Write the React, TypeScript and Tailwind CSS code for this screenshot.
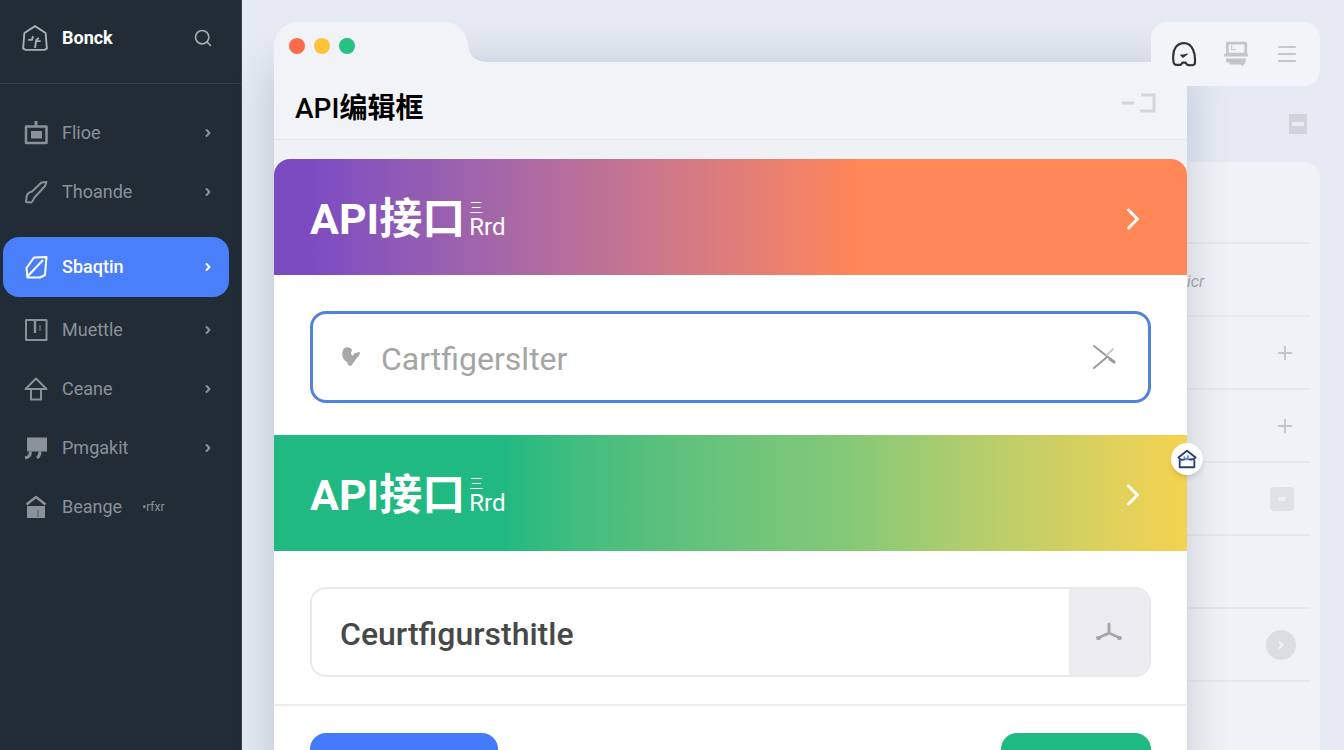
import type { ReactNode } from "react";
import { ChevronRight, Menu, Plus, Search } from "lucide-react";
import clsx from "clsx";

type IconProps = { children: ReactNode; className?: string };

const Icon = ({ children, className }: IconProps) => (
  <svg
    viewBox="0 0 24 24"
    fill="none"
    stroke="currentColor"
    strokeWidth="2"
    strokeLinejoin="round"
    className={clsx("shrink-0", className)}
    aria-hidden="true"
  >
    {children}
  </svg>
);

const navItems = [
  {
    label: "Flioe",
    icon: (
      <>
        <path d="M2 5.500h20.500v16.500H2z" strokeWidth="2.500" />
        <path d="M7 10h11v7.500H7z" fill="currentColor" stroke="none" />
        <path d="M12 5.500V0" strokeWidth="3" />
      </>
    ),
  },
  {
    label: "Thoande",
    icon: (
      <path
        d="M22.500 2l-5 .5L8 11.500c-4 1-5.500 3-5.500 6L2 22l5 .5c2-.5 2-3 3.500-5L21 6z"
        strokeWidth="2"
      />
    ),
  },
  {
    label: "Sbaqtin",
    active: true,
    icon: (
      <>
        <path d="M10 2.500l12.500-.5-1.500 18-5 2.500H3.500l-1-9.500z" />
        <path d="M3 22L19 5" />
      </>
    ),
  },
  {
    label: "Muettle",
    icon: (
      <>
        <path d="M2 2h20.500v20H2z" />
        <path d="M11 2v13" strokeWidth="2.500" />
        <path d="M16 7v6" strokeWidth="1" />
      </>
    ),
  },
  {
    label: "Ceane",
    icon: <path d="M12 1.500L1.500 12H7v10.500h10V12h5.500zM7 12h10" strokeWidth="2" />,
  },
  {
    label: "Pmgakit",
    icon: (
      <>
        <path d="M3 1.500h20v14H3z" fill="currentColor" stroke="none" />
        <path d="M6.500 15.500c0 4-2 6-5.500 6.500M16 15.500c0 3-1 5-3 6.500" strokeWidth="3" />
      </>
    ),
  },
  {
    label: "Beange",
    note: "•rfxr",
    icon: (
      <>
        <path d="M2.500 9.500L12 2l9.500 7.500" strokeWidth="2.500" />
        <path d="M3 11h18v12H3z" fill="currentColor" stroke="none" />
        <path d="M14 15v7" stroke="#6b757e" />
      </>
    ),
  },
];

const Sidebar = () => (
  <aside className="w-[242px] shrink-0 border-r border-[#3a444e] bg-[#222c36] text-[#89929b]">
    <div className="flex h-[84px] items-center border-b border-[#35404a] pb-2 pl-5 pr-7">
      <Icon className="mr-3 size-[30px] text-[#a9b1b8]">
        <path d="M12 2.500L3.500 8 2.500 20.500l2 1h15l2-1L20.500 8z" strokeWidth="1.500" />
        <path d="M6.500 13.500h3l1-3M12 20l1-6.500 2-1.500M12.500 14.500h4" strokeWidth="1.500" />
      </Icon>
      <span className="text-lg font-bold text-white">Bonck</span>
      <button className="ml-auto" aria-label="Search">
        <Search className="size-5 text-[#a3abb2]" />
      </button>
    </div>
    <nav className="flex flex-col pl-[3px] pr-3 pt-[19px]">
      {navItems.map((item) => (
        <a
          key={item.label}
          href="#"
          className={clsx(
            "flex items-center rounded-2xl pl-[21px] pr-[15px] text-lg",
            item.active
              ? "mb-[3px] mt-4 h-[60px] bg-[#4a7ffc] font-medium text-white"
              : "h-[59px]"
          )}
        >
          <Icon className="mr-[14px] size-6">{item.icon}</Icon>
          {item.label}
          {item.note ? (
            <span className="ml-5 text-xs">{item.note}</span>
          ) : (
            <ChevronRight className="ml-auto size-3" strokeWidth={4} />
          )}
        </a>
      ))}
    </nav>
  </aside>
);

const Banner = ({ className }: { className: string }) => (
  <button
    className={clsx(
      "flex h-[116px] w-full items-center pl-9 pr-9 pt-1 text-left text-white",
      className
    )}
  >
    <span className="text-[43px] font-bold leading-[60px]">API接口</span>
    <span className="ml-1 flex flex-col">
      <span className="text-sm leading-4">三</span>
      <span className="text-2xl leading-6">Rrd</span>
    </span>
    <ChevronRight className="ml-auto size-9" strokeWidth={2} />
  </button>
);

const EditorWindow = () => (
  <section className="relative z-10 flex min-w-0 flex-1 flex-col pt-[22px]">
    {/* window tab */}
    <div className="relative z-10 flex h-10 shrink-0 items-end">
      <div className="flex h-full w-[194px] items-center gap-[9px] rounded-t-3xl bg-[#f2f3f7] pl-[15px] pt-2">
        <span className="size-4 rounded-full bg-[#fc6c4c]" />
        <span className="size-4 rounded-full bg-[#fdc23c]" />
        <span className="size-4 rounded-full bg-[#27c184]" />
      </div>
      <span className="size-4 bg-[radial-gradient(circle_at_top_right,transparent_15px,#f2f3f7_16px)]" />
    </div>

    <div className="flex flex-1 shrink-0 flex-col bg-[#f2f3f7] shadow-[0_4px_40px_rgba(60,70,100,0.24)]">
      <header className="flex h-[78px] shrink-0 items-center justify-between border-b border-[#e4e6ea] pl-[21px] pr-[30px] pt-4">
        <h1 className="text-[28px] font-medium leading-9 text-black">
          API<span className="font-bold">编辑框</span>
        </h1>
        <svg viewBox="0 0 36 20" fill="none" stroke="#d3d5d9" strokeWidth="3" className="mb-3 h-5 w-9" aria-hidden="true">
          <path d="M1 10h12" />
          <path d="M20 2h13v16H19" />
        </svg>
      </header>

      <div className="flex-1 bg-[#f0f1f5] pt-[19px]">
        <div className="min-h-full rounded-t-2xl bg-white">
          <Banner className="rounded-t-2xl bg-linear-to-r from-[#7c4bc2] from-4% via-[#ff8656] via-64% to-[#ff8656]" />
          <div className="px-9 pb-8 pt-9">
            <label className="flex h-[92px] items-center rounded-2xl border-[3px] border-[#5283dc] px-7">
              <svg viewBox="0 0 20 20" fill="#a8a8a8" className="mr-5 size-5 shrink-0" aria-hidden="true">
                <path d="M2 3c2-4 8-3 9 0l-1 3 1 3 3-3 5-1c0 3-2 5-4 7l-5 7c-2 0-3-1-4-4C2 13 0 8 2 3z" />
              </svg>
              <input
                aria-label="Filter"
                placeholder="Cartfigerslter"
                className="min-w-0 flex-1 pt-1 text-[32px] outline-none placeholder:text-[#a5a5a5]"
              />
              <svg viewBox="0 0 24 26" fill="none" stroke="#9b9b9b" strokeWidth="2" strokeLinecap="round" className="mr-1 h-[26px] w-6 shrink-0" aria-hidden="true">
                <path d="M2 2l19 15M2 24l13-11" />
                <path d="M15 11l6-6" stroke="#c9c9c9" strokeWidth="2" />
                <path d="M18 15l4 3" strokeWidth="3" />
              </svg>
            </label>
          </div>

          <div className="relative">
            <Banner className="bg-linear-to-r from-[#1fb981] from-25% via-[#84c977] via-63% to-[#f6d250]" />
            <button
              aria-label="Home"
              className="absolute -right-4 top-2 flex size-8 items-center justify-center rounded-full bg-white text-[#263f73] shadow-md"
            >
              <Icon className="size-[22px]">
                <path d="M4 11v10h16V11M2 11l10-8 10 8M3 11c3 4 6 1 9 1s6 2 9-1" />
                <path d="M9 9c0 3 2 4 4 3V8" stroke="#6b8fe0" />
              </Icon>
            </button>
          </div>

          <div className="px-9 pb-[27px] pt-9">
            <label className="flex h-[90px] overflow-hidden rounded-2xl border-2 border-[#e9e9eb]">
              <input
                aria-label="Title"
                defaultValue="Ceurtfigursthitle"
                className="min-w-0 flex-1 px-7 pt-1 text-[32px] font-medium text-[#484848] outline-none"
              />
              <span className="flex w-20 items-center justify-center bg-[#ededf1]">
                <svg viewBox="0 0 26 20" fill="none" stroke="#a7a7aa" strokeWidth="3" strokeLinecap="round" className="h-5 w-[26px]" aria-hidden="true">
                  <path d="M13 2v9L2 16M13 11l11 5" />
                  <path d="M2 16h1M23 16h1" strokeWidth="4" />
                </svg>
              </span>
            </label>
          </div>

          <footer className="flex h-[110px] justify-between border-t-2 border-[#ededef] px-9 pt-[27px]">
            <button aria-label="Save" className="h-[60px] w-[188px] rounded-2xl bg-[#437bfb]" />
            <button aria-label="Confirm" className="h-[60px] w-[150px] rounded-2xl bg-[#1ebb80]" />
          </footer>
        </div>
      </div>
    </div>
  </section>
);

const Toolbar = () => (
  <div className="relative z-20 -ml-9 flex h-16 items-center gap-[26px] rounded-2xl bg-[#f3f4f8] pl-5">
    <button aria-label="Account">
      <Icon className="size-[26px] text-[#333]">
        <path d="M12 2C5 2 2 8 2 14c0 5 0 8 3 8h4l1.500-2h3l1.500 2c3 .5 6 1 7-1C23 12 20 2 12 2z" />
        <path d="M9 13l2 2 4-3-3 1z" fill="currentColor" strokeWidth="1" />
      </Icon>
    </button>
    <button aria-label="Display">
      <Icon className="size-[26px] text-[#c3c4c8]">
        <path d="M4 2h17v10H4zM1 13h22" strokeWidth="2.500" />
        <path d="M3 18h18M6 20h11l2 2" strokeWidth="3.500" />
        <path d="M8 4v4h4" strokeWidth="1" />
      </Icon>
    </button>
    <button aria-label="Menu">
      <Menu className="size-6 text-[#c6c7cb]" strokeWidth={2} />
    </button>
  </div>
);

const rows: ReactNode[] = [
  null,
  <Plus className="mr-[14px] size-[22px]" strokeWidth={2} />,
  <Plus className="mr-[14px] size-[22px]" strokeWidth={2} />,
  <span className="mr-4 flex size-6 items-center justify-center rounded-sm bg-[#e0e1e4]">
    <span className="h-1 w-2 rounded-sm bg-[#eeeff2]" />
  </span>,
  null,
  <span className="mr-[14px] flex size-[30px] items-center justify-center rounded-full bg-[#dcdde0]">
    <ChevronRight className="size-3 text-[#f0f1f4]" strokeWidth={4} />
  </span>,
];

const SidePanel = () => (
  <aside className="mr-6 flex w-[133px] shrink-0 flex-col pt-[22px]">
    <Toolbar />
    <div className="flex h-[76px] items-center justify-end pr-[13px]">
      <span className="flex h-5 w-[18px] items-center justify-center bg-[#cfd3dc]">
        <span className="h-1 w-3 bg-[#e9edf4]" />
      </span>
    </div>
    <div className="flex-1 rounded-tr-2xl bg-[#f1f2f6] pr-[10px] text-[#c3c4c8]">
      <div className="h-[82px] border-b-2 border-[#e7e8ec]" />
      {rows.map((row, i) => (
        <div key={i} className="flex h-[73px] items-center justify-end border-b-2 border-[#e7e8ec]">
          {i === 0 && (
            <span className="mr-auto pt-1 text-base italic text-[#a9aaae]">icr</span>
          )}
          {row}
        </div>
      ))}
    </div>
  </aside>
);

export default function App() {
  return (
    <div className="flex h-screen overflow-hidden bg-[#e5eaf4] font-['Roboto','Noto_Sans_CJK_SC',sans-serif]">
      <Sidebar />
      <main className="flex min-w-0 flex-1 pl-8">
        <EditorWindow />
        <SidePanel />
      </main>
    </div>
  );
}
